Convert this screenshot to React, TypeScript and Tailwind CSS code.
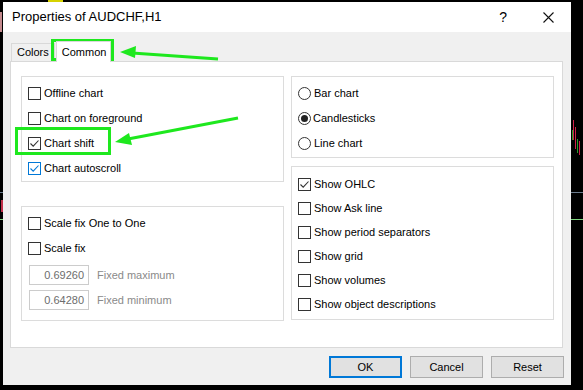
import React from "react"

const font = { fontFamily: '"Liberation Sans", Arial, sans-serif' }

function CheckBox({ checked = false, focus = false }: { checked?: boolean; focus?: boolean }) {
  return (
    <div
      className={`w-[13px] h-[13px] shrink-0 bg-white border flex items-center justify-center ${
        focus ? "border-[#0078d7]" : "border-[#333333]"
      }`}
    >
      {checked && (
        <svg width="11" height="11" viewBox="0 0 11 11">
          <path d="M1.5 5.5 L4.2 8.2 L9.5 2.5" fill="none" stroke={focus ? "#0078d7" : "#333333"} strokeWidth="1.1" />
        </svg>
      )}
    </div>
  )
}

function Radio({ checked = false }: { checked?: boolean }) {
  return (
    <div className="w-[13px] h-[13px] shrink-0 rounded-full bg-white border border-[#333333] flex items-center justify-center">
      {checked && <div className="w-[7px] h-[7px] rounded-full bg-[#222222]" />}
    </div>
  )
}

function Row({ children, label, h = "h-[25px]", gap = "gap-[3px]" }: { children: React.ReactNode; label: string; h?: string; gap?: string }) {
  return (
    <div className={`flex items-center ${h} ${gap}`}>
      {children}
      <span className="text-[11px] text-black leading-none">{label}</span>
    </div>
  )
}

function FixedInput({ value, label }: { value: string; label: string }) {
  return (
    <div className="flex items-center gap-[8px] pl-[1px]">
      <div className="w-[60px] h-[20px] border border-[#cccccc] bg-white flex items-center justify-end pr-[4px] text-[11px] text-[#6d6d6d]">
        {value}
      </div>
      <span className="text-[11px] text-[#8a8a8a]">{label}</span>
    </div>
  )
}

function Button({ label, primary = false }: { label: string; primary?: boolean }) {
  return (
    <div
      className={`w-[73px] h-[22px] flex items-center justify-center text-[11px] text-black bg-[#e1e1e1] ${
        primary ? "border-2 border-[#0078d7]" : "border border-[#adadad]"
      }`}
    >
      {label}
    </div>
  )
}

export default function App() {
  return (
    <div className="relative w-[583px] h-[390px] bg-black overflow-hidden" style={font}>
      {/* chart bits behind the dialog */}
      <svg className="absolute inset-0" width="583" height="390">
        <rect x="48" y="0" width="15" height="2" fill="#d6d200" />
        <rect x="0" y="12" width="2" height="20" fill="#c48a8e" />
        <rect x="0" y="192" width="3" height="1" fill="#6b7b8c" />
        <rect x="1" y="200" width="2" height="12" fill="#c0304a" />
        <rect x="0" y="219" width="3" height="1" fill="#7fd67f" />
        <rect x="573" y="120" width="1" height="20" fill="#d0204a" />
        <rect x="572" y="130" width="1" height="10" fill="#2a9a2a" />
        <rect x="575" y="127" width="1" height="22" fill="#d0204a" />
        <rect x="577" y="139" width="1" height="14" fill="#2a9a2a" />
        <rect x="579" y="141" width="1" height="14" fill="#d0204a" />
        <rect x="571" y="192" width="12" height="1" fill="#6b7b8c" />
        <rect x="571" y="219" width="12" height="1" fill="#7fd67f" />
      </svg>

      <div className="relative ml-[3px] mt-[2px] w-[568px] h-[383px] bg-[#f0f0f0] flex flex-col">
        {/* title bar */}
        <div className="h-[30px] bg-white flex items-center pl-[9px] pr-[17px] shrink-0">
          <span className="text-[13px] text-black flex-1">Properties of AUDCHF,H1</span>
          <span className="text-[14px] text-black mr-[36px]">?</span>
          <svg width="11" height="11" viewBox="0 0 11 11">
            <path d="M0.5 0.5 L10.5 10.5 M10.5 0.5 L0.5 10.5" stroke="#111111" strokeWidth="1.1" />
          </svg>
        </div>

        {/* tabs */}
        <div className="flex items-end pl-[8px] pt-[8px] h-[29px] shrink-0">
          <div className="h-[18px] px-[5px] border border-b-0 border-[#d9d9d9] bg-[#f0f0f0] flex items-center text-[11px] text-black">
            Colors
          </div>
          <div className="h-[21px] w-[55px] ml-[1px] px-[5px] border border-b-0 border-[#d9d9d9] bg-white flex items-center text-[11px] text-black relative z-10 -mb-[1px]">
            Common
          </div>
        </div>

        {/* tab panel */}
        <div className="ml-[7px] w-[553px] h-[287px] bg-white border border-[#d9d9d9] flex gap-[7px] pl-[10px] pt-[14px] shrink-0">
          <div className="w-[263px] flex flex-col gap-[24px]">
            <div className="border border-[#dcdcdc] pl-[6px] pt-[4px]">
              <Row label="Offline chart">
                <CheckBox />
              </Row>
              <Row label="Chart on foreground">
                <CheckBox />
              </Row>
              <Row label="Chart shift">
                <CheckBox checked />
              </Row>
              <Row label="Chart autoscroll">
                <CheckBox checked focus />
              </Row>
            </div>
            <div className="border border-[#dcdcdc] pl-[6px] pt-[4px] pb-[10px]">
              <Row label="Scale fix One to One">
                <CheckBox />
              </Row>
              <Row label="Scale fix">
                <CheckBox />
              </Row>
              <div className="flex flex-col gap-[5px] mt-[4px]">
                <FixedInput value="0.69260" label="Fixed maximum" />
                <FixedInput value="0.64280" label="Fixed minimum" />
              </div>
            </div>
          </div>

          <div className="w-[263px] flex flex-col gap-[8px]">
            <div className="border border-[#dcdcdc] pl-[6px] pt-[4px] pb-[1px]">
              <Row label="Bar chart" gap="gap-[3px]">
                <Radio />
              </Row>
              <Row label="Candlesticks" gap="gap-[2px]">
                <Radio checked />
              </Row>
              <Row label="Line chart" gap="gap-[3px]">
                <Radio />
              </Row>
            </div>
            <div className="border border-[#dcdcdc] pl-[6px] pt-[5px] pb-[3px]">
              <Row label="Show OHLC" h="h-[24px]">
                <CheckBox checked />
              </Row>
              <Row label="Show Ask line" h="h-[24px]">
                <CheckBox />
              </Row>
              <Row label="Show period separators" h="h-[24px]">
                <CheckBox />
              </Row>
              <Row label="Show grid" h="h-[24px]">
                <CheckBox />
              </Row>
              <Row label="Show volumes" h="h-[24px]">
                <CheckBox />
              </Row>
              <Row label="Show object descriptions" h="h-[24px]">
                <CheckBox />
              </Row>
            </div>
          </div>
        </div>

        {/* buttons */}
        <div className="flex justify-end gap-[8px] pr-[7px] mt-[8px]">
          <Button label="OK" primary />
          <Button label="Cancel" />
          <Button label="Reset" />
        </div>
      </div>

      {/* green annotations */}
      <div className="absolute left-[51px] top-[39px] w-[63px] h-[22px] border-[3px] border-[#1ee81e]" />
      <div className="absolute left-[15px] top-[127px] w-[96px] h-[28px] border-[3px] border-[#1ee81e]" />
      <svg className="absolute inset-0 pointer-events-none" width="583" height="390">
        <path d="M218 59 L132 53" stroke="#1ee81e" strokeWidth="3" />
        <path d="M120 52 L136 46 L135 58 Z" fill="#1ee81e" />
        <path d="M238 118 L128 139" stroke="#1ee81e" strokeWidth="3" />
        <path d="M115 142 L129 133 L132 145 Z" fill="#1ee81e" />
      </svg>
    </div>
  )
}
